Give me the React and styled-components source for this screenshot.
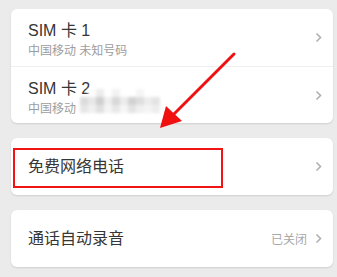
import React from 'react';
import styled, { createGlobalStyle } from 'styled-components';

const GlobalStyle = createGlobalStyle`
  html, body {
    margin: 0;
    padding: 0;
    background: #ebebeb;
    font-family: "Liberation Sans", "Noto Sans CJK SC", sans-serif;
  }
`;

const Page = styled.div`
  position: relative;
  width: 337px;
  height: 277px;
  box-sizing: border-box;
  padding: 9px 4px 0 11px;
  display: flex;
  flex-direction: column;
  gap: 15px;
  background: #ebebeb;
  overflow: hidden;
`;

const Card = styled.div`
  position: relative;
  background: #ffffff;
  border-radius: 6px;
  box-shadow: 0 1px 2px rgba(0, 0, 0, 0.12);
  overflow: hidden;
`;

const Row = styled.div`
  position: relative;
  height: 57px;
  display: flex;
  align-items: center;
  padding: 0 11px 0 17px;
  box-sizing: border-box;
  border-top: ${(p) => (p.divided ? '1px solid #efefef' : 'none')};
`;

const TextCol = styled.div`
  flex: 1;
  display: flex;
  flex-direction: column;
  gap: ${(p) => (p.stacked ? '3px' : '0')};
  padding-top: ${(p) => (p.stacked ? '5px' : '0')};
`;

const Title = styled.div`
  font-size: 16px;
  color: #363636;
  line-height: 20px;
`;

const Sub = styled.div`
  position: relative;
  font-size: 12px;
  color: #9d9d9d;
  line-height: 15px;
`;

const Value = styled.span`
  font-size: 12px;
  color: #a8a8a8;
  margin-right: 8px;
`;

const Mosaic = styled.span`
  position: absolute;
  left: 52px;
  top: -13px;
  width: 88px;
  height: 28px;
  display: grid;
  grid-template-columns: repeat(11, 8px);
  grid-template-rows: repeat(3, 8px);
  filter: blur(1.5px);
`;

const Cell = styled.span`
  background: ${(p) => p.c};
`;

const Highlight = styled.div`
  position: absolute;
  left: 2px;
  top: 10px;
  width: 210px;
  height: 40px;
  box-sizing: border-box;
  border: 2px solid #f21414;
  pointer-events: none;
`;

const ArrowLayer = styled.svg`
  position: absolute;
  left: 0;
  top: 0;
  pointer-events: none;
`;

const Chevron = () => (
  <svg width="7" height="11" viewBox="0 0 7 11">
    <path d="M1.5 1.5 L5.5 5.5 L1.5 9.5" fill="none" stroke="#b0b0b0" strokeWidth="1.6" />
  </svg>
);

const mosaicColors = [
  'transparent', '#ffffff', '#ececec', '#ffffff', '#f2f2f2', '#ffffff', '#ffffff', '#f5f5f5', '#ffffff', '#ffffff', '#ffffff',
  '#dcdcdc', '#e8e8e8', '#cfcfcf', '#eeeeee', '#d8d8d8', '#ececec', '#d2d2d2', '#dedede', '#ececec', '#e4e4e4', '#ffffff',
  '#e6e6e6', '#f0f0f0', '#e0e0e0', '#f4f4f4', '#e8e8e8', '#f6f6f6', '#e4e4e4', '#f0f0f0', '#f4f4f4', '#ededed', '#ffffff',
];

export default function App() {
  return (
    <>
      <GlobalStyle />
      <Page>
        <Card>
          <Row>
            <TextCol stacked>
              <Title>SIM 卡 1</Title>
              <Sub>中国移动 未知号码</Sub>
            </TextCol>
            <Chevron />
          </Row>
          <Row divided>
            <TextCol stacked>
              <Title>SIM 卡 2</Title>
              <Sub>
                中国移动
                <Mosaic>
                  {mosaicColors.map((c, i) => (
                    <Cell key={i} c={c} />
                  ))}
                </Mosaic>
              </Sub>
            </TextCol>
            <Chevron />
          </Row>
        </Card>
        <Card>
          <Row>
            <TextCol>
              <Title>免费网络电话</Title>
            </TextCol>
            <Chevron />
            <Highlight />
          </Row>
        </Card>
        <Card>
          <Row>
            <TextCol>
              <Title>通话自动录音</Title>
            </TextCol>
            <Value>已关闭</Value>
            <Chevron />
          </Row>
        </Card>
        <ArrowLayer width="337" height="277" viewBox="0 0 337 277">
          <line x1="234" y1="54" x2="170" y2="118" stroke="#f01010" strokeWidth="3" strokeLinecap="round" />
          <polygon points="160,128 166,106 182,121" fill="#f01010" />
        </ArrowLayer>
      </Page>
    </>
  );
}
